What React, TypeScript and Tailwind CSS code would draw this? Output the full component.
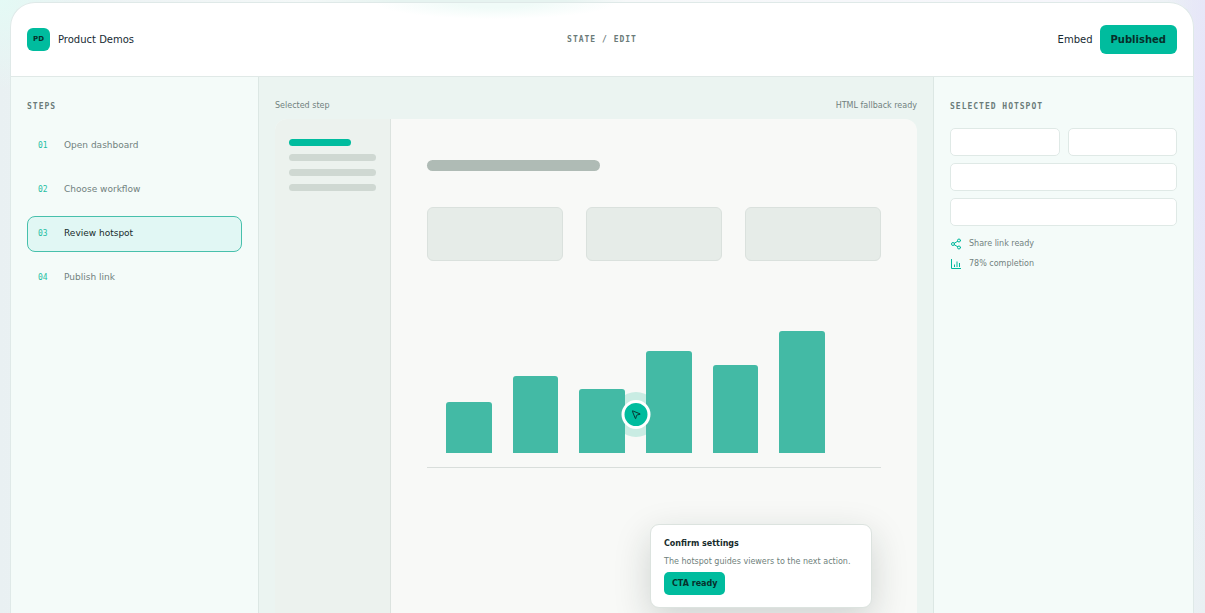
import React, { useState } from "react";
import { MousePointer2, Share2 } from "lucide-react";

const steps = [
    { id: "01", label: "Open dashboard" },
    { id: "02", label: "Choose workflow" },
    { id: "03", label: "Review hotspot" },
    { id: "04", label: "Publish link" },
];

const bars = [51, 77, 64, 102, 88, 122];

const fieldClass = "h-7 w-full min-w-0 rounded-[5px] border border-[#dfe9e6] bg-white px-2 text-[8px] outline-none";
const headingClass = "font-['DejaVu_Sans_Mono'] text-[8px] leading-3 font-bold tracking-[1px] text-[#6b7b79]";

function ChartIcon() {
    return (
        <svg className="h-3 w-3 text-[#00b89c]" viewBox="0 0 12 12" fill="none" stroke="currentColor" strokeWidth="1">
            <path d="M1.5 1v9.5H11" />
            <path d="M4.5 9V6.5M7 9V3.5M9.5 9V5" />
        </svg>
    )
}

function Preview() {
    return (
        <div className="relative flex min-h-0 flex-1 rounded-t-xl bg-[#f8f9f7]">
            <div className="flex w-[116px] shrink-0 flex-col gap-2 rounded-tl-xl border-r border-[#dce3df] bg-[#ecf2ee] px-[14px] pt-5">
                <div className="h-[7px] w-[71%] rounded-full bg-[#00bc9e]" />
                <div className="h-[7px] rounded-full bg-[#cfd8d2]" />
                <div className="h-[7px] rounded-full bg-[#cfd8d2]" />
                <div className="h-[7px] rounded-full bg-[#cfd8d2]" />
            </div>
            <div className="min-w-0 flex-1 px-9 pt-[41px]">
                <div className="h-[11px] w-[38%] rounded-full bg-[#afbbb5]" />
                <div className="mt-9 grid grid-cols-3 gap-[23px]">
                    <div className="h-[54px] rounded-md border border-[#dae1dd] bg-[#e6ece8]" />
                    <div className="h-[54px] rounded-md border border-[#dae1dd] bg-[#e6ece8]" />
                    <div className="h-[54px] rounded-md border border-[#dae1dd] bg-[#e6ece8]" />
                </div>
                <div className="relative mt-[70px] flex items-end gap-[21px] border-b border-[#d9dedb] pr-14 pb-[14px] pl-[19px]">
                    {/* halo stays under the bars, the dot goes over them */}
                    <div className="absolute bottom-[30px] left-[46%] h-[45px] w-[45px] -translate-x-1/2 rounded-full bg-[#c9ece3]" />
                    {bars.map((height, i) => (
                        <div key={i} className="relative flex-1 rounded-t-[3px] bg-[#43baa5]" style={{ height: height }} />
                    ))}
                    <button
                        aria-label="Hotspot"
                        className="absolute bottom-[38px] left-[46%] flex h-[29px] w-[29px] -translate-x-1/2 items-center justify-center rounded-full border-[3px] border-white bg-[#00bc9e] text-[#0b2b2b]"
                    >
                        <MousePointer2 size={11} strokeWidth={2} />
                    </button>
                </div>
            </div>
            <div className="absolute top-[405px] right-[45px] h-[84px] w-[222px] rounded-[9px] border border-[#dce3df] bg-white px-[13px] pt-[13px] shadow-[0_12px_36px_rgba(20,40,35,0.18)]">
                <p className="text-[8px] leading-3 font-bold text-[#172b2b]">Confirm settings</p>
                <p className="mt-[6px] text-[8px] leading-3 whitespace-nowrap text-[#6f7f7c]">The hotspot guides viewers to the next action.</p>
                <button className="mt-1 h-[23px] rounded-[5px] bg-[#00bc9e] px-2 text-[8px] font-bold text-[#07302b]">CTA ready</button>
            </div>
        </div>
    )
}

export default function App() {
    const [active, setActive] = useState("03")

    return (
        <div className="flex h-screen flex-col overflow-hidden bg-[radial-gradient(circle_at_0%_0%,#e4faf5_0,transparent_90px),radial-gradient(ellipse_40px_460px_at_100%_20%,#e6e4fa_0,transparent),linear-gradient(90deg,#e9f0f2,#f4f8f8_25%,#e6f3f0_33%,#e6f3f0_47%,#f6f8f9_52%,#f6f6fb_90%,#e9f0f3)] pt-[2px] pr-[11px] pl-[10px] font-['DejaVu_Sans',sans-serif]">
            <div className="flex min-h-0 flex-1 flex-col overflow-hidden rounded-t-[25px] border border-b-0 border-[#dfe9e8] bg-white">
                <header className="grid h-[74px] shrink-0 grid-cols-3 items-center border-b border-[#e0e9e7] bg-[radial-gradient(ellipse_120px_16px_at_41%_0%,#f0fbf8_30%,transparent)] px-4">
                    <div className="flex items-center gap-2">
                        <div className="flex h-[23px] w-[23px] items-center justify-center rounded-md bg-[#00bc9e] text-[7px] font-bold text-[#07302b]">PD</div>
                        <span className="text-[10px] text-[#172b33]">Product Demos</span>
                    </div>
                    <p className={headingClass + " text-center"}>STATE / EDIT</p>
                    <div className="flex items-center justify-end gap-[7px] text-[10px]">
                        <button className="text-[#172b33]">Embed</button>
                        <button className="h-[29px] rounded-md bg-[#00bc9e] px-[11px] font-bold text-[#07302b]">Published</button>
                    </div>
                </header>

                <div className="grid min-h-0 flex-1 grid-cols-[248px_minmax(0,1fr)_260px]">
                    <aside className="border-r border-[#dce7e4] bg-[#f4fbf9] px-4 pt-6">
                        <h2 className={headingClass}>STEPS</h2>
                        <div className="mt-[15px] flex flex-col gap-2">
                            {steps.map((step) => (
                                <button
                                    key={step.id}
                                    onClick={() => setActive(step.id)}
                                    className={
                                        active === step.id
                                            ? "flex h-9 items-center rounded-lg border border-[#47c0ac] bg-[#e1f7f4] px-[10px] text-[9px] text-[#172b2b]"
                                            : "flex h-9 items-center rounded-lg border border-transparent px-[10px] text-[9px] text-[#71817e]"
                                    }
                                >
                                    <span className="w-[26px] text-left font-['DejaVu_Sans_Mono'] text-[8px] text-[#1fbea3]">{step.id}</span>
                                    {step.label}
                                </button>
                            ))}
                        </div>
                    </aside>

                    <main className="flex min-h-0 flex-col bg-[#ebf4f1] px-4 pt-[23px]">
                        <div className="mb-[7px] flex justify-between text-[8px] leading-3 text-[#71817e]">
                            <span>Selected step</span>
                            <span>HTML fallback ready</span>
                        </div>
                        <Preview />
                    </main>

                    <aside className="border-l border-[#dce7e4] bg-[#f4fbf9] px-4 pt-6">
                        <h2 className={headingClass}>SELECTED HOTSPOT</h2>
                        <div className="mt-[15px] grid grid-cols-2 gap-x-2 gap-y-[7px]">
                            <input aria-label="Position X" className={fieldClass} />
                            <input aria-label="Position Y" className={fieldClass} />
                            <input aria-label="Title" className={fieldClass + " col-span-2"} />
                            <input aria-label="Link" className={fieldClass + " col-span-2"} />
                        </div>
                        <div className="mt-3 flex flex-col gap-2 text-[8px] leading-3 text-[#71817e]">
                            <p className="flex items-center gap-[7px]">
                                <Share2 size={12} strokeWidth={2} className="text-[#00b89c]" />
                                Share link ready
                            </p>
                            <p className="flex items-center gap-[7px]">
                                <ChartIcon />
                                78% completion
                            </p>
                        </div>
                    </aside>
                </div>
            </div>
        </div>
    )
}
